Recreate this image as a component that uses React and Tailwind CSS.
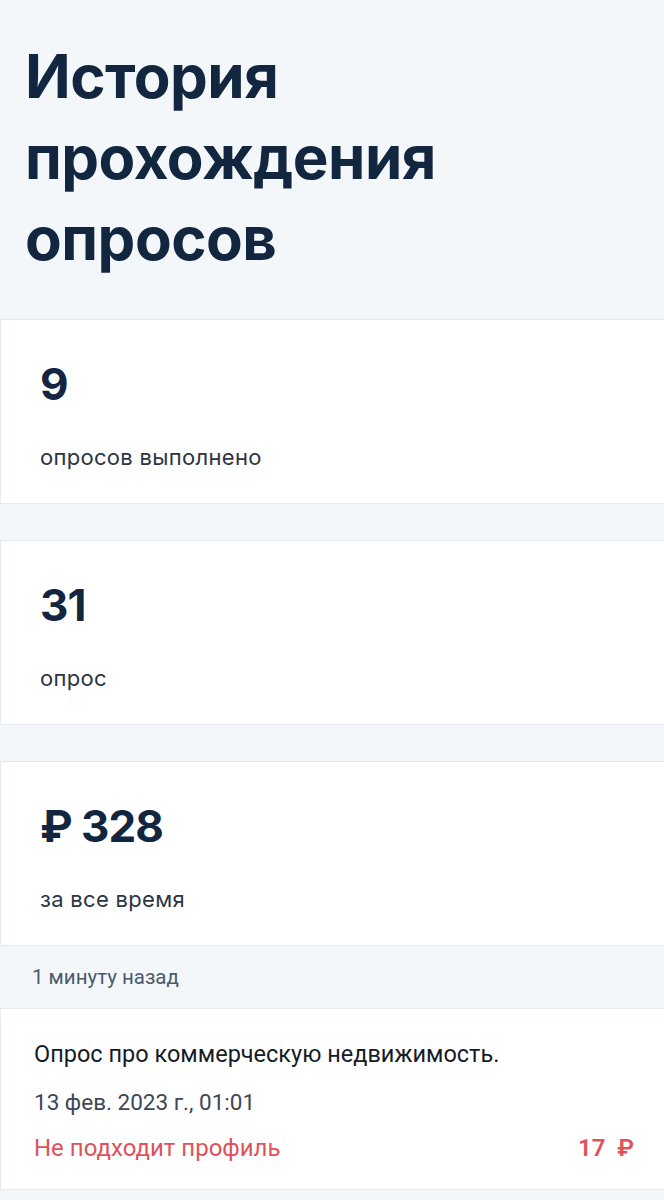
import React from "react";

const stats = [
    { value: "9", label: "опросов выполнено" },
    { value: "31", label: "опрос" },
    { value: "₽ 328", label: "за все время" },
];

export default function App() {
    return (
        <div className="min-h-[1200px] bg-[#f4f7fa] font-['Inter',sans-serif]">

            {/* Header */}
            <header className="h-[319px] pl-[25px] pt-[36px]">
                <h1 className="text-[60px] font-bold leading-[81px] tracking-[-0.5px] text-[#12263f]">
                    История<br />прохождения<br />опросов
                </h1>
            </header>

            {/* Stats */}
            <div className="flex flex-col gap-[36px]">
                {stats.map((s) => (
                    <div key={s.label} className="h-[185px] border-y border-l border-[#e6eaef] bg-white pl-[39px] pt-[36px]">
                        <div className="text-[44px] font-bold leading-[56px] tracking-[-1px] text-[#12263f]">{s.value}</div>
                        <div className="mt-[30px] text-[22px] leading-[30px] tracking-[0.3px] text-[#2b3544]">{s.label}</div>
                    </div>
                ))}
            </div>

            {/* History */}
            <div className="font-['Roboto',sans-serif]">
                <div className="flex h-[62px] items-center pl-[32px] text-[20.5px] text-[#4b5a6d]">
                    1 минуту назад
                </div>
                <div className="h-[182px] border-y border-l border-[#e6eaef] bg-white pl-[33px] pr-[30px] pt-[29px]">
                    <div className="text-[23.5px] leading-[32px] text-[#161c26]">Опрос про коммерческую недвижимость.</div>
                    <div className="mt-[16px] text-[22.5px] leading-[32px] text-[#3d4756]">13 фев. 2023 г., 01:01</div>
                    <div className="mt-[14px] flex items-center justify-between text-[24px] leading-[32px] text-[#e0525a]">
                        <span>Не подходит профиль</span>
                        <span className="font-semibold">17&nbsp;&nbsp;₽</span>
                    </div>
                </div>
            </div>
        </div>
    );
}
